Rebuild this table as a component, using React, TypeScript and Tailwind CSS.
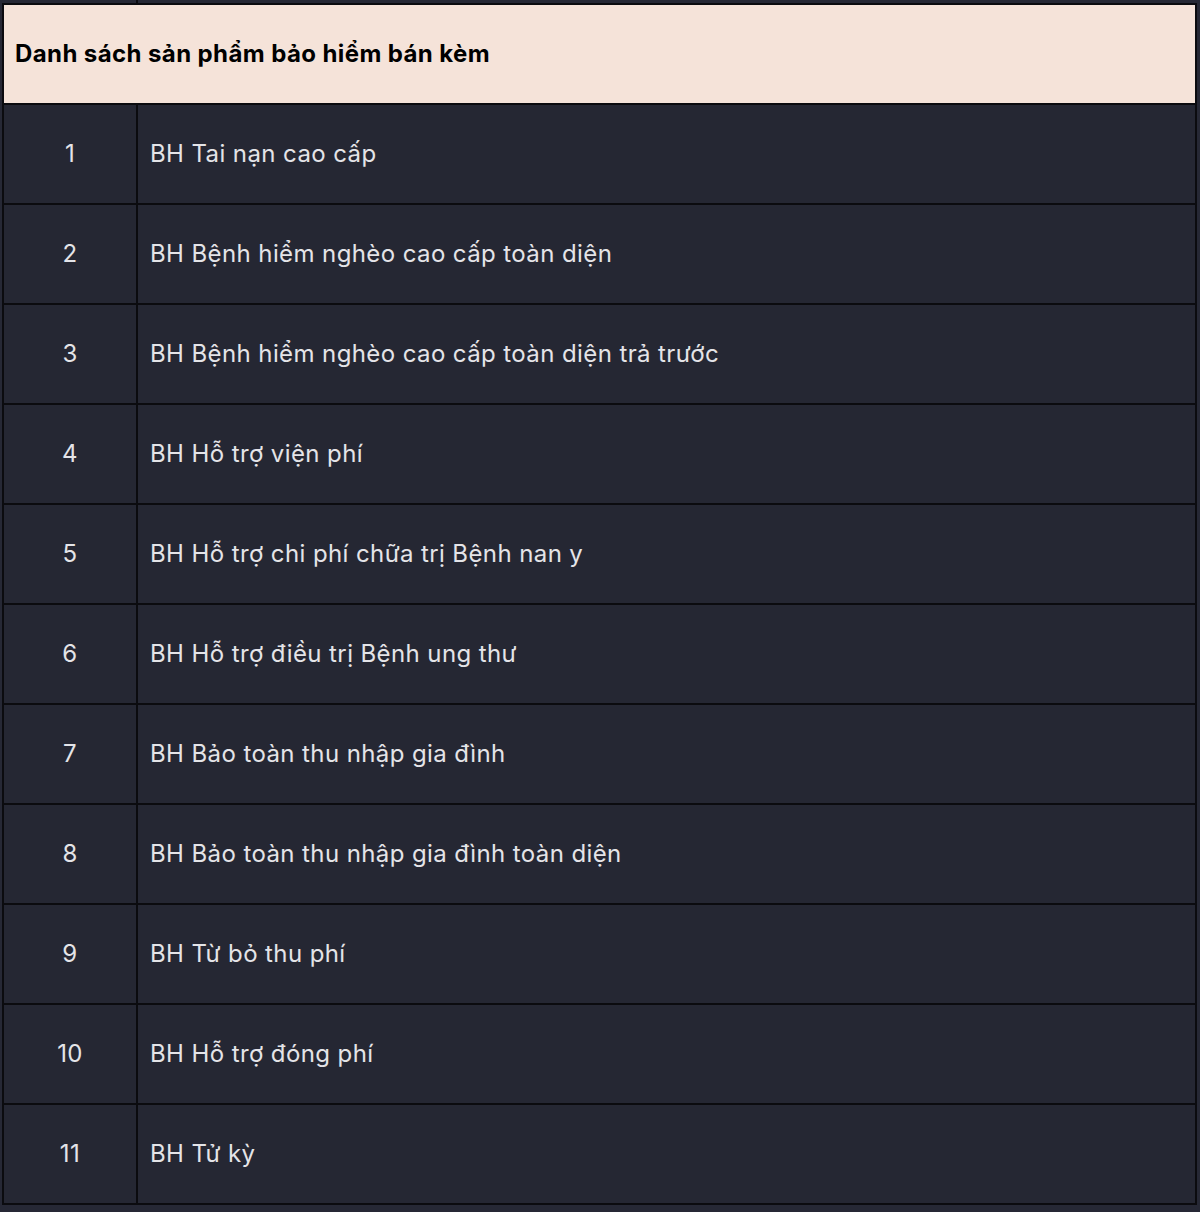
import React from 'react';

const products = [
  'BH Tai nạn cao cấp',
  'BH Bệnh hiểm nghèo cao cấp toàn diện',
  'BH Bệnh hiểm nghèo cao cấp toàn diện trả trước',
  'BH Hỗ trợ viện phí',
  'BH Hỗ trợ chi phí chữa trị Bệnh nan y',
  'BH Hỗ trợ điều trị Bệnh ung thư',
  'BH Bảo toàn thu nhập gia đình',
  'BH Bảo toàn thu nhập gia đình toàn diện',
  'BH Từ bỏ thu phí',
  'BH Hỗ trợ đóng phí',
  'BH Tử kỳ',
];

const App: React.FC = () => {
  return (
    <div className="w-[1200px] h-[1212px] overflow-hidden bg-[#262835] pl-[2px] font-['Inter','Noto_Sans',sans-serif]">
      {/* tail of the previous row */}
      <div className="h-[3px] w-[1195px] flex">
        <div className="w-[134px]" />
        <div className="w-[2px] bg-[#0b0b0f]" />
      </div>
      <div className="w-[1195px] bg-[#0b0b0f] p-[2px] flex flex-col gap-[2px]">
        <div className="h-[98px] bg-[#f5e3d9] flex items-center px-[11px]">
          <h2 className="text-[24px] font-bold text-black tracking-[0.4px]">
            Danh sách sản phẩm bảo hiểm bán kèm
          </h2>
        </div>
        {products.map((name, i) => (
          <div key={i} className="grid grid-cols-[132px_1fr] gap-[2px] h-[98px]">
            <div className="bg-[#252733] flex items-center justify-center text-[24px] tracking-[0.4px] text-[#e4e4e8]">
              {i + 1}
            </div>
            <div className="bg-[#252733] flex items-center px-[12px] text-[24px] tracking-[0.4px] text-[#e4e4e8]">
              {name}
            </div>
          </div>
        ))}
      </div>
    </div>
  );
};

export default App;
